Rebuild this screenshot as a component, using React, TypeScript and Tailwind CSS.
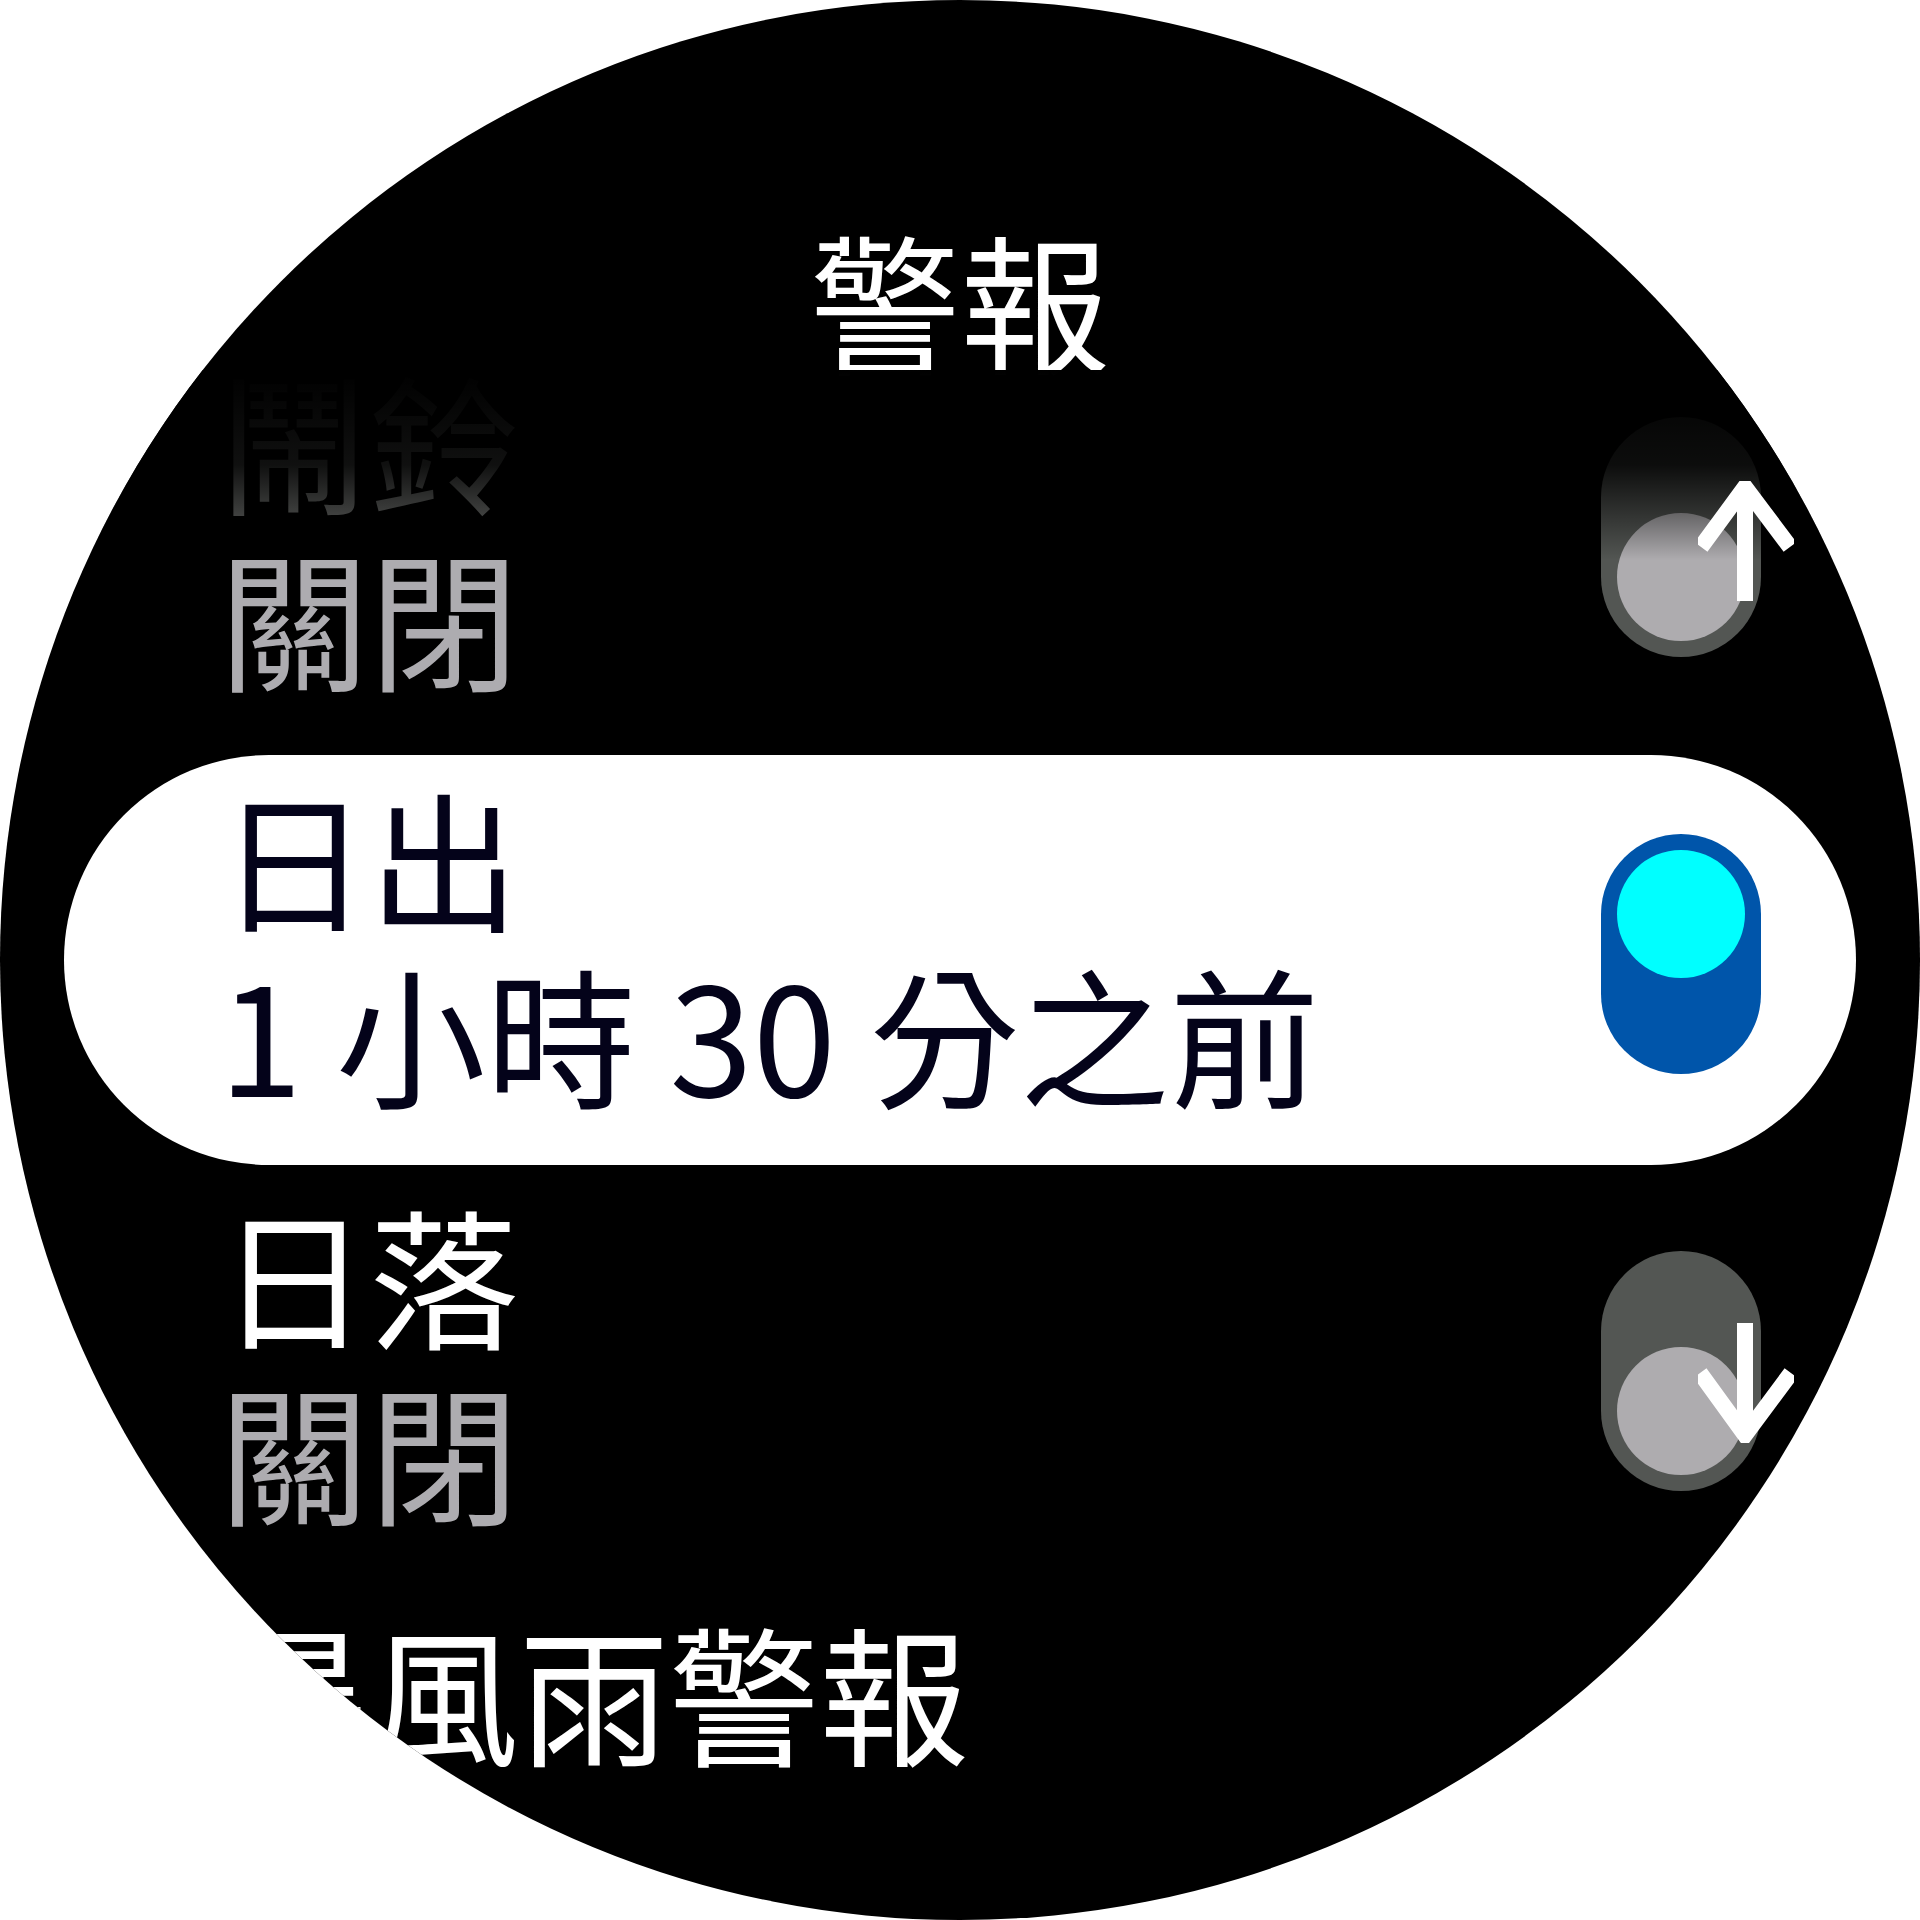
const font = { fontFamily: '"Noto Sans CJK TC", "Noto Sans", sans-serif' };

type ToggleProps = { on?: boolean; arrow?: 'up' | 'down' };

const Toggle = ({ on = false, arrow }: ToggleProps) => (
  <div className="relative mb-[12px] shrink-0">
    <div
      className={
        on
          ? 'flex h-[240px] w-[160px] flex-col justify-start rounded-full bg-[#0055aa] p-[16px]'
          : 'flex h-[240px] w-[160px] flex-col justify-end rounded-full bg-[#535653] p-[16px]'
      }
    >
      <div
        className={
          on
            ? 'h-[128px] w-[128px] rounded-full bg-[#00ffff]'
            : 'h-[128px] w-[128px] rounded-full bg-[#aeacaf]'
        }
      />
    </div>

    {/* scroll hint arrows sit over the switch */}
    {arrow === 'up' && (
      <svg
        className="absolute left-[97px] top-[64px] z-10"
        width="96"
        height="120"
        viewBox="0 0 96 120"
        fill="none"
        stroke="white"
        strokeWidth="16"
      >
        <path d="M47 4 V120" />
        <path d="M3 66 L47 6 L92 66" strokeLinejoin="miter" />
      </svg>
    )}
    {arrow === 'down' && (
      <svg
        className="absolute left-[97px] top-[72px] z-10"
        width="96"
        height="120"
        viewBox="0 0 96 120"
        fill="none"
        stroke="white"
        strokeWidth="16"
      >
        <path d="M47 0 V114" />
        <path d="M2 50 L47 112 L93 50" strokeLinejoin="miter" />
      </svg>
    )}
  </div>
);

type RowProps = {
  label: string;
  value: string;
  selected?: boolean;
  labelClass?: string;
  toggle?: ToggleProps | null;
};

const Row = ({ label, value, selected = false, labelClass, toggle }: RowProps) => (
  <div
    className={
      selected
        ? 'mx-[64px] flex h-[410px] items-center justify-between rounded-full bg-white pl-[155px] pr-[95px]'
        : 'mx-[64px] flex h-[410px] items-center justify-between rounded-full pl-[155px] pr-[95px]'
    }
  >
    <div className="mb-[32px] flex flex-col whitespace-nowrap text-[150px]">
      <div className={`h-[176px] leading-[176px] ${labelClass ?? (selected ? 'text-[#04031a]' : 'text-white')}`}>
        {label}
      </div>
      <div className={`h-[176px] leading-[176px] ${selected ? 'text-[#04031a]' : 'text-[#adacb0]'}`}>{value}</div>
    </div>
    {toggle && <Toggle {...toggle} />}
  </div>
);

export default function App() {
  return (
    <div className="min-h-screen bg-white" style={font}>
      <div className="relative flex h-[1920px] w-[1920px] flex-col overflow-hidden rounded-full bg-black pt-[258px]">
        <h1 className="h-[80px] text-center text-[150px] font-normal leading-[80px] text-white">警報</h1>

        <div className="flex flex-col gap-[7px]">
          <Row label="鬧鈴" value="關閉" labelClass="text-[#6a6c6a]" toggle={{ arrow: 'up' }} />
          <Row label="日出" value="1 小時 30 分之前" selected toggle={{ on: true }} />
          <Row label="日落" value="關閉" toggle={{ arrow: 'down' }} />
          <Row label="暴風雨警報" value="關閉" toggle={null} />
        </div>

        <div className="pointer-events-none absolute inset-x-0 top-[370px] z-[5] h-[190px] bg-linear-to-b from-black via-black/85 via-50% to-transparent" />
      </div>
    </div>
  );
}
